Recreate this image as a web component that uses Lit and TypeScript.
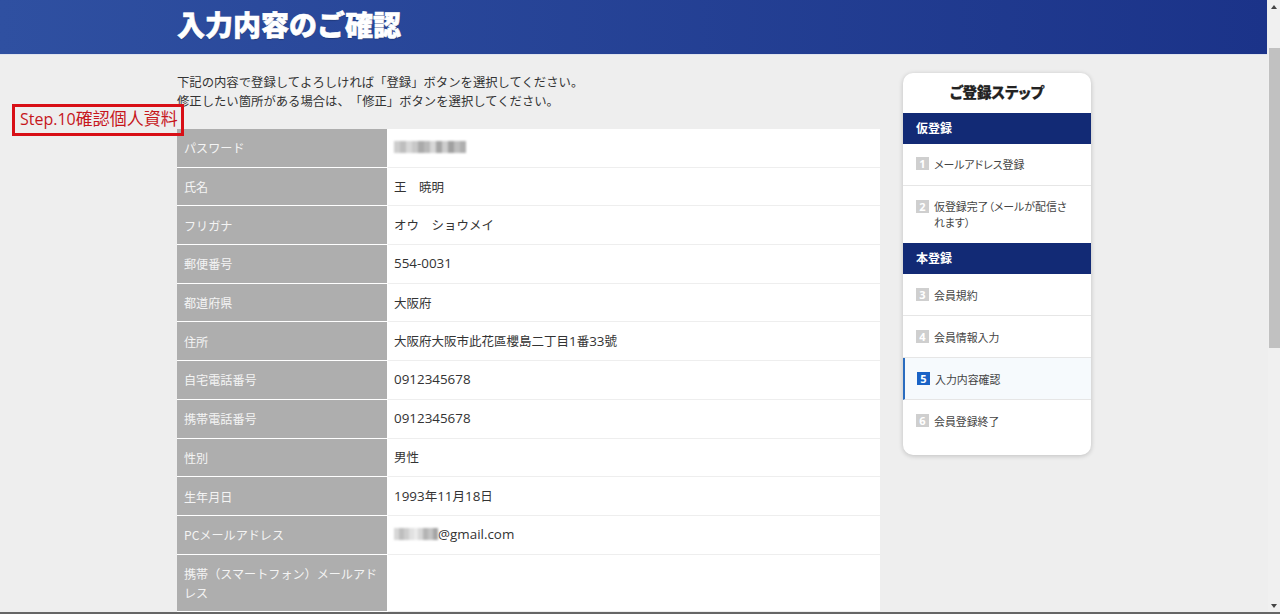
import { LitElement, css, html } from "lit";
import { customElement } from "lit/decorators.js";

const ROWS: [string, string][] = [
  ["パスワード", "blur"],
  ["氏名", "王　暁明"],
  ["フリガナ", "オウ　ショウメイ"],
  ["郵便番号", "554-0031"],
  ["都道府県", "大阪府"],
  ["住所", "大阪府大阪市此花區櫻島二丁目1番33號"],
  ["自宅電話番号", "0912345678"],
  ["携帯電話番号", "0912345678"],
  ["性別", "男性"],
  ["生年月日", "1993年11月18日"],
  ["PCメールアドレス", "mail"],
  ["携帯（スマートフォン）メールアドレス", ""],
];

const PASS_SHADES = [205, 190, 215, 200, 170, 185, 215, 165, 205, 160, 190, 175];
const MAIL_SHADES = [215, 190, 205, 225, 235, 215, 180, 195, 165];

const STEPS_A = [
  { n: 1, text: "メールアドレス登録" },
  { n: 2, text: "仮登録完了（メールが配信されます）" },
];
const STEPS_B = [
  { n: 3, text: "会員規約" },
  { n: 4, text: "会員情報入力" },
  { n: 5, text: "入力内容確認", active: true },
  { n: 6, text: "会員登録終了" },
];

@customElement("app-root")
export class AppRoot extends LitElement {
  static styles = css`
    :host {
      display: flex;
      flex-direction: column;
      height: 614px;
      overflow: hidden;
      background: #eeeeee;
      color: #333;
      font-family: "Noto Sans CJK JP", "Open Sans", sans-serif;
      text-spacing-trim: space-all;
      position: relative;
    }
    .screen {
      flex: 1;
      display: flex;
      min-height: 0;
    }
    .page {
      flex: 1;
      min-width: 0;
      overflow: hidden;
    }
    .head {
      height: 55px;
      margin-right: 1px;
      padding-left: 177px;
      display: flex;
      align-items: center;
      background: linear-gradient(90deg, #2f50a1, #1b3389);
      border-bottom: 1px solid #dfe3ee;
      box-sizing: border-box;
    }
    .head h1 {
      margin: 0 0 6px;
      font-size: 28px;
      line-height: 1;
      font-weight: 900;
      color: #fff;
      -webkit-text-stroke: 0.6px #fff;
      text-shadow: 0 1px 1px rgba(0, 0, 0, 0.3);
    }
    .wrap {
      display: flex;
      gap: 23px;
      padding: 18px 0 0 177px;
    }
    .main {
      width: 703px;
    }
    .intro {
      margin: 0 0 18px;
      font-size: 12.35px;
      line-height: 19px;
    }
    .row {
      display: grid;
      grid-template-columns: 211px 1fr;
      min-height: 38.7px;
      box-sizing: border-box;
    }
    .th {
      background: #aeaeae;
      color: #f4f4f4;
      font-size: 12.1px;
      line-height: 19px;
      padding: 9px 7px;
      border-bottom: 1.5px solid #fff;
      border-right: 1px solid #fff;
      box-sizing: border-box;
      display: flex;
      align-items: center;
    }
    .td {
      background: #fff;
      font-size: 12.5px;
      line-height: 19px;
      padding: 7px 6px 8px;
      border-bottom: 1.5px solid #eee;
      box-sizing: border-box;
      display: flex;
      align-items: center;
    }
    .latin {
      font-family: "Open Sans", sans-serif;
      font-size: 13.4px;
      white-space: pre;
    }
    .fuzz {
      display: inline-flex;
      filter: blur(1.2px);
    }
    .fuzz i {
      display: block;
      width: 6px;
      height: 12px;
    }
    .fuzz.short i {
      width: 4.9px;
    }
    .side {
      width: 188px;
      height: 382px;
      flex: none;
      background: #fff;
      border-radius: 10px;
      box-shadow: 0 1px 5px rgba(0, 0, 0, 0.2);
      overflow: hidden;
    }
    .side h2 {
      margin: 0;
      height: 40px;
      padding-bottom: 3px;
      box-sizing: border-box;
      display: flex;
      align-items: center;
      justify-content: center;
      font-size: 14.5px;
      font-weight: 900;
      color: #222;
      -webkit-text-stroke: 0.25px #222;
      font-feature-settings: "palt";
    }
    .sec {
      height: 31px;
      display: flex;
      align-items: center;
      padding: 0 0 2px 13px;
      box-sizing: border-box;
      background: #122a75;
      color: #fff;
      font-size: 12px;
      font-weight: 700;
    }
    .step {
      display: flex;
      gap: 5px;
      min-height: 42px;
      padding: 12.5px 13px 0;
      box-sizing: border-box;
      border-bottom: 1px solid #e6e6e6;
      font-size: 10.9px;
      line-height: 16px;
      color: #444;
      font-feature-settings: "palt";
    }
    .step.first {
      padding-top: 11.5px;
    }
    .step.two {
      min-height: 57px;
      border-bottom: none;
      padding: 12px 16px 0 13px;
    }
    .step.last {
      border-bottom: none;
    }
    .step.on {
      background: #f6fafd;
      border-left: 2px solid #2a6cbf;
      padding-left: 12px;
    }
    .num {
      flex: none;
      width: 13px;
      height: 13px;
      margin-top: 1.5px;
      background: #cfcfcf;
      color: #fff;
      font: 700 11px/13px "Open Sans", sans-serif;
      text-align: center;
    }
    .on .num {
      background: #1a63c6;
    }
    .bar {
      width: 12px;
      flex: none;
      position: relative;
      background: #f0f0f0;
    }
    .thumb {
      margin: 48px 0 0 1px;
      height: 300px;
      background: #c1c1c1;
    }
    .arrow {
      position: absolute;
      left: 3px;
      width: 0;
      height: 0;
      border-left: 3.5px solid transparent;
      border-right: 3.5px solid transparent;
    }
    .arrow.up {
      top: 5px;
      border-bottom: 4px solid #444;
    }
    .arrow.down {
      top: 604px;
      border-top: 4px solid #444;
    }
    .edge {
      height: 2px;
      flex: none;
      background: #666;
    }
    .note {
      position: absolute;
      left: 12px;
      top: 104px;
      width: 172px;
      height: 32px;
      box-sizing: border-box;
      border: 3px solid #d80f16;
      color: #c6161c;
      font-size: 17px;
      line-height: 22px;
      padding-left: 5px;
      white-space: nowrap;
      font-family: "Noto Sans CJK TC", sans-serif;
    }
    .note .latin {
      font-size: 16px;
    }
  `;

  fuzz(shades: number[], short = false) {
    return html`<span class="fuzz ${short ? "short" : ""}"
      >${shades.map(
        (s) => html`<i style="background: rgb(${s},${s},${s})"></i>`
      )}</span
    >`;
  }

  // latin runs are set in a larger font than the Japanese around them
  text(value: string) {
    return value
      .split(/([0-9A-Za-z@.\-]+)/)
      .map((part, i) =>
        i % 2 ? html`<span class="latin">${part}</span>` : part
      );
  }

  cell(value: string) {
    if (value === "blur") return this.fuzz(PASS_SHADES);
    if (value === "mail")
      return html`${this.fuzz(MAIL_SHADES, true)}<span class="latin"
          >@gmail.com</span
        >`;
    return html`<span>${this.text(value)}</span>`;
  }

  step(s: { n: number; text: string; active?: boolean }, cls = "") {
    return html`<div class="step ${cls} ${s.active ? "on" : ""}">
      <span class="num">${s.n}</span><span>${s.text}</span>
    </div>`;
  }

  render() {
    return html`
      <div class="screen">
        <div class="page">
          <header class="head"><h1>入力内容のご確認</h1></header>
          <div class="wrap">
            <div class="main">
              <p class="intro">
                下記の内容で登録してよろしければ「登録」ボタンを選択してください。<br />
                修正したい箇所がある場合は、「修正」ボタンを選択してください。
              </p>
              ${ROWS.map(
                ([k, v]) => html`<div class="row">
                  <div class="th">${k}</div>
                  <div class="td">${this.cell(v)}</div>
                </div>`
              )}
            </div>
            <aside class="side">
              <h2>ご登録ステップ</h2>
              <div class="sec">仮登録</div>
              ${this.step(STEPS_A[0], "first")} ${this.step(STEPS_A[1], "two")}
              <div class="sec">本登録</div>
              ${STEPS_B.map((s, i) => this.step(s, i === 3 ? "last" : ""))}
            </aside>
          </div>
        </div>
        <div class="bar">
          <div class="arrow up"></div>
          <div class="thumb"></div>
          <div class="arrow down"></div>
        </div>
      </div>
      <div class="edge"></div>
      <div class="note">${this.text("Step.10")}確認個人資料</div>
    `;
  }
}
